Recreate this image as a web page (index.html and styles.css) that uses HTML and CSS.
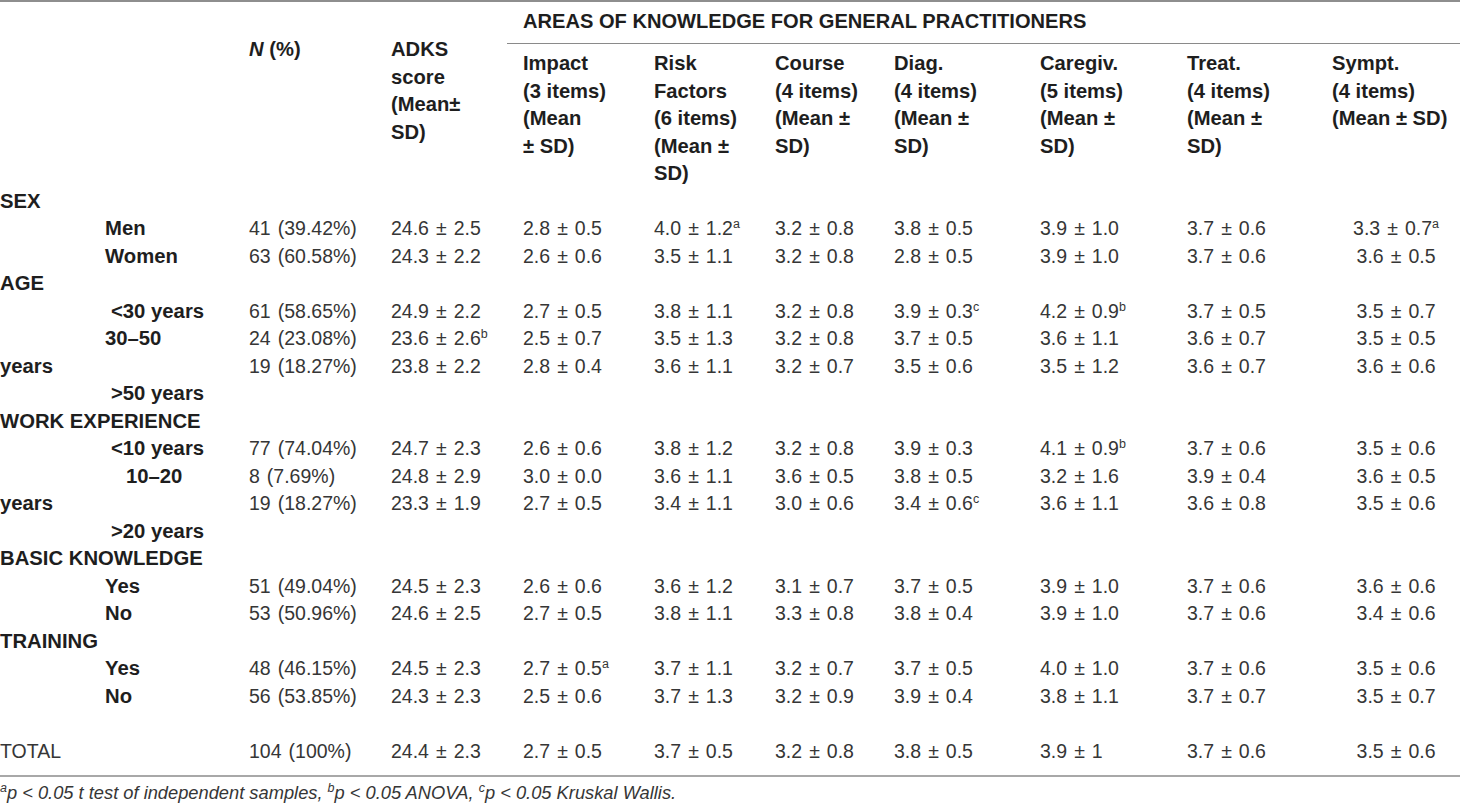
FILE: index.html
```html
<!DOCTYPE html>
<html lang="en">
<head>
<meta charset="utf-8">
<title>ADKS table</title>
<link rel="stylesheet" href="styles.css">
</head>
<body>
<table class="tbl">
  <colgroup>
    <col class="c0"><col class="c1"><col class="c2"><col class="c3"><col class="c4">
    <col class="c5"><col class="c6"><col class="c7"><col class="c8"><col class="c9">
  </colgroup>
  <thead>
    <tr>
      <th rowspan="2" class="lab"></th>
      <th rowspan="2" class="span2"><i>N</i> (%)</th>
      <th rowspan="2" class="span2">ADKS<br>score<br>(Mean±<br>SD)</th>
      <th colspan="7" class="areas">AREAS OF KNOWLEDGE FOR GENERAL PRACTITIONERS</th>
    </tr>
    <tr class="sub">
      <th>Impact<br>(3 items)<br>(Mean<br>± SD)</th>
      <th>Risk<br>Factors<br>(6 items)<br>(Mean ±<br>SD)</th>
      <th>Course<br>(4 items)<br>(Mean ±<br>SD)</th>
      <th>Diag.<br>(4 items)<br>(Mean ±<br>SD)</th>
      <th>Caregiv.<br>(5 items)<br>(Mean ±<br>SD)</th>
      <th>Treat.<br>(4 items)<br>(Mean ±<br>SD)</th>
      <th>Sympt.<br>(4 items)<br>(Mean ± SD)</th>
    </tr>
  </thead>
  <tbody>
    <tr class="grp"><td class="lab">SEX</td><td></td><td></td><td></td><td></td><td></td><td></td><td></td><td></td><td></td></tr>
    <tr><td class="lab in1">Men</td><td>41 (39.42%)</td><td>24.6 ± 2.5</td><td>2.8 ± 0.5</td><td>4.0 ± 1.2<sup>a</sup></td><td>3.2 ± 0.8</td><td>3.8 ± 0.5</td><td>3.9 ± 1.0</td><td>3.7 ± 0.6</td><td class="ctr">3.3 ± 0.7<sup>a</sup></td></tr>
    <tr><td class="lab in1">Women</td><td>63 (60.58%)</td><td>24.3 ± 2.2</td><td>2.6 ± 0.6</td><td>3.5 ± 1.1</td><td>3.2 ± 0.8</td><td>2.8 ± 0.5</td><td>3.9 ± 1.0</td><td>3.7 ± 0.6</td><td class="ctr">3.6 ± 0.5</td></tr>
    <tr class="grp"><td class="lab">AGE</td><td></td><td></td><td></td><td></td><td></td><td></td><td></td><td></td><td></td></tr>
    <tr><td class="lab in2">&lt;30 years</td><td>61 (58.65%)</td><td>24.9 ± 2.2</td><td>2.7 ± 0.5</td><td>3.8 ± 1.1</td><td>3.2 ± 0.8</td><td>3.9 ± 0.3<sup>c</sup></td><td>4.2 ± 0.9<sup>b</sup></td><td>3.7 ± 0.5</td><td class="ctr">3.5 ± 0.7</td></tr>
    <tr><td class="lab in1">30–50</td><td>24 (23.08%)</td><td>23.6 ± 2.6<sup>b</sup></td><td>2.5 ± 0.7</td><td>3.5 ± 1.3</td><td>3.2 ± 0.8</td><td>3.7 ± 0.5</td><td>3.6 ± 1.1</td><td>3.6 ± 0.7</td><td class="ctr">3.5 ± 0.5</td></tr>
    <tr><td class="lab">years</td><td>19 (18.27%)</td><td>23.8 ± 2.2</td><td>2.8 ± 0.4</td><td>3.6 ± 1.1</td><td>3.2 ± 0.7</td><td>3.5 ± 0.6</td><td>3.5 ± 1.2</td><td>3.6 ± 0.7</td><td class="ctr">3.6 ± 0.6</td></tr>
    <tr><td class="lab in2">&gt;50 years</td><td></td><td></td><td></td><td></td><td></td><td></td><td></td><td></td><td></td></tr>
    <tr class="grp"><td class="lab">WORK EXPERIENCE</td><td></td><td></td><td></td><td></td><td></td><td></td><td></td><td></td><td></td></tr>
    <tr><td class="lab in2">&lt;10 years</td><td>77 (74.04%)</td><td>24.7 ± 2.3</td><td>2.6 ± 0.6</td><td>3.8 ± 1.2</td><td>3.2 ± 0.8</td><td>3.9 ± 0.3</td><td>4.1 ± 0.9<sup>b</sup></td><td>3.7 ± 0.6</td><td class="ctr">3.5 ± 0.6</td></tr>
    <tr><td class="lab in3">10–20</td><td>8 (7.69%)</td><td>24.8 ± 2.9</td><td>3.0 ± 0.0</td><td>3.6 ± 1.1</td><td>3.6 ± 0.5</td><td>3.8 ± 0.5</td><td>3.2 ± 1.6</td><td>3.9 ± 0.4</td><td class="ctr">3.6 ± 0.5</td></tr>
    <tr><td class="lab">years</td><td>19 (18.27%)</td><td>23.3 ± 1.9</td><td>2.7 ± 0.5</td><td>3.4 ± 1.1</td><td>3.0 ± 0.6</td><td>3.4 ± 0.6<sup>c</sup></td><td>3.6 ± 1.1</td><td>3.6 ± 0.8</td><td class="ctr">3.5 ± 0.6</td></tr>
    <tr><td class="lab in2">&gt;20 years</td><td></td><td></td><td></td><td></td><td></td><td></td><td></td><td></td><td></td></tr>
    <tr class="grp"><td class="lab">BASIC KNOWLEDGE</td><td></td><td></td><td></td><td></td><td></td><td></td><td></td><td></td><td></td></tr>
    <tr><td class="lab in1">Yes</td><td>51 (49.04%)</td><td>24.5 ± 2.3</td><td>2.6 ± 0.6</td><td>3.6 ± 1.2</td><td>3.1 ± 0.7</td><td>3.7 ± 0.5</td><td>3.9 ± 1.0</td><td>3.7 ± 0.6</td><td class="ctr">3.6 ± 0.6</td></tr>
    <tr><td class="lab in1">No</td><td>53 (50.96%)</td><td>24.6 ± 2.5</td><td>2.7 ± 0.5</td><td>3.8 ± 1.1</td><td>3.3 ± 0.8</td><td>3.8 ± 0.4</td><td>3.9 ± 1.0</td><td>3.7 ± 0.6</td><td class="ctr">3.4 ± 0.6</td></tr>
    <tr class="grp"><td class="lab">TRAINING</td><td></td><td></td><td></td><td></td><td></td><td></td><td></td><td></td><td></td></tr>
    <tr><td class="lab in1">Yes</td><td>48 (46.15%)</td><td>24.5 ± 2.3</td><td>2.7 ± 0.5<sup>a</sup></td><td>3.7 ± 1.1</td><td>3.2 ± 0.7</td><td>3.7 ± 0.5</td><td>4.0 ± 1.0</td><td>3.7 ± 0.6</td><td class="ctr">3.5 ± 0.6</td></tr>
    <tr><td class="lab in1">No</td><td>56 (53.85%)</td><td>24.3 ± 2.3</td><td>2.5 ± 0.6</td><td>3.7 ± 1.3</td><td>3.2 ± 0.9</td><td>3.9 ± 0.4</td><td>3.8 ± 1.1</td><td>3.7 ± 0.7</td><td class="ctr">3.5 ± 0.7</td></tr>
    <tr class="blank"><td class="lab">&nbsp;</td><td></td><td></td><td></td><td></td><td></td><td></td><td></td><td></td><td></td></tr>
    <tr class="total"><td class="lab plain">TOTAL</td><td>104 (100%)</td><td>24.4 ± 2.3</td><td>2.7 ± 0.5</td><td>3.7 ± 0.5</td><td>3.2 ± 0.8</td><td>3.8 ± 0.5</td><td>3.9 ± 1</td><td>3.7 ± 0.6</td><td class="ctr">3.5 ± 0.6</td></tr>
  </tbody>
</table>
<p class="note"><sup>a</sup>p &lt; 0.05 t test of independent samples, <sup>b</sup>p &lt; 0.05 ANOVA, <sup>c</sup>p &lt; 0.05 Kruskal Wallis.</p>
</body>
</html>
```

FILE: styles.css
```css
html, body {
  margin: 0;
  padding: 0;
  background: #ffffff;
}

body {
  font-family: "Liberation Sans", Arial, Helvetica, sans-serif;
  color: #363636;
  font-size: 19.5px;
}

.tbl {
  width: 1460px;
  table-layout: fixed;
  border-collapse: separate;
  border-spacing: 0;
  border-top: 2px solid #8e8e8e;
  border-bottom: 2px solid #a8a8a8;
}

.c0 { width: 233px; }
.c1 { width: 142px; }
.c2 { width: 132px; }
.c3 { width: 131px; }
.c4 { width: 121px; }
.c5 { width: 119px; }
.c6 { width: 146px; }
.c7 { width: 147px; }
.c8 { width: 145px; }
.c9 { width: 144px; }

.tbl th,
.tbl td {
  padding: 0 0 0 16px;
  text-align: left;
  vertical-align: top;
  line-height: 27.5px;
  white-space: nowrap;
  word-spacing: 1.6px;
}

.tbl th {
  font-weight: bold;
  color: #1e1e1e;
  font-size: 20.2px;
  word-spacing: 0;
}

.tbl .lab {
  padding-left: 0;
  font-weight: bold;
  color: #1e1e1e;
  font-size: 20.3px;
  word-spacing: 0;
}

.tbl .lab.plain {
  font-weight: normal;
  color: #363636;
  font-size: 19.5px;
}

.tbl .in1 { padding-left: 105px; }
.tbl .in2 { padding-left: 111px; }
.tbl .in3 { padding-left: 126px; }

.tbl th.span2 {
  padding-top: 34.25px;
}

.tbl th.areas {
  font-size: 20.1px;
  padding-top: 6.25px;
  padding-bottom: 7.25px;
  border-bottom: 1px solid #8a8a8a;
}

.tbl .sub th {
  padding-top: 6.25px;
  padding-bottom: 0;
}

.tbl td.ctr {
  text-align: center;
}

.tbl .total td {
  padding-bottom: 9.75px;
}

sup {
  font-size: 12.5px;
  line-height: 0;
  vertical-align: 7px;
  word-spacing: 0;
}

.note {
  margin: 6px 0 0 0;
  font-style: italic;
  font-size: 18.3px;
  line-height: 20px;
  color: #363636;
}
```
